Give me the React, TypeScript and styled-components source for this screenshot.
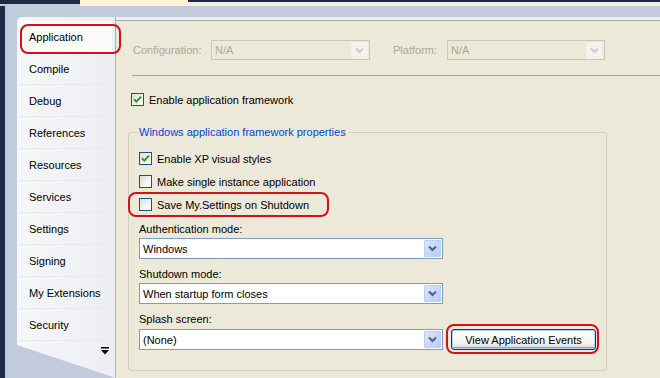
import React from 'react'
import styled, { createGlobalStyle } from 'styled-components'

const GlobalStyle = createGlobalStyle`
  html, body { margin: 0; padding: 0; }
  body {
    font-family: "Liberation Sans", Arial, sans-serif;
    font-size: 11px;
    color: #000;
  }
`

const SPage = styled.div`
  position: relative;
  width: 660px;
  height: 378px;
  overflow: hidden;
  background: #1f2a44;
  display: flex;
  flex-direction: column;
`

const STopBar = styled.div`
  height: 6px;
  display: flex;
  flex-shrink: 0;
`

const STopSegment = styled.div<{ $w?: number; $kind: 'dark' | 'cream' | 'rest' }>`
  width: ${p => (p.$w ? `${p.$w}px` : 'auto')};
  flex: ${p => (p.$w ? '0 0 auto' : '1')};
  background: ${p =>
    p.$kind === 'cream'
      ? '#fdf5da'
      : p.$kind === 'rest'
      ? 'linear-gradient(#1f2a44 0 2px, #f3efe2 2px)'
      : 'linear-gradient(#1f2a44 0 4px, #c1cbdc 4px)'};
`

const SFrame = styled.div`
  flex: 1;
  margin-left: 5px;
  background: #c1cbdc;
  padding: 11px 0 0 12px;
  display: flex;
  min-height: 0;
`

const SSidebar = styled.div`
  width: 98px;
  flex-shrink: 0;
  border-right: 1px solid #a9aeb8;
  border-top-left-radius: 5px;
  background: linear-gradient(to right, #f6f7f9, #eceef2);
  clip-path: polygon(0 0, 100% 0, 100% 100%, 0 328px);
  padding-top: 4px;
  display: flex;
  flex-direction: column;
`

const STab = styled.div<{ $active?: boolean }>`
  height: 32px;
  flex-shrink: 0;
  display: flex;
  align-items: center;
  box-sizing: border-box;
  background: ${p => (p.$active ? '#fbfbfa' : 'transparent')};
  border-bottom: 1px solid ${p => (p.$active ? 'transparent' : '#e7e9ed')};
  margin: 0 3px 0 2px;
  padding-left: 10px;
`

const SSidebarFooter = styled.div`
  display: flex;
  justify-content: flex-end;
  padding: 6px 6px 0 0;
`

const SContent = styled.div`
  flex: 1;
  padding: 23px 0 0 12px;
  background: linear-gradient(#eef0f4 0 3px, #a7abb4 3px 4px, #ece9d8 4px);
  display: flex;
  flex-direction: column;
`

const SConfigRow = styled.div`
  display: flex;
  align-items: center;
  height: 20px;
  margin-left: 5px;
`

const SDimLabel = styled.span<{ $w: number; $gap?: number }>`
  width: ${p => p.$w}px;
  margin-left: ${p => p.$gap ?? 0}px;
  color: #aca899;
`

const SRule = styled.div`
  height: 1px;
  background: #aca899;
  margin: 15px 0 0 4px;
`

const SCheckRow = styled.label<{ $top?: number; $indent?: number }>`
  display: flex;
  align-items: center;
  gap: 5px;
  height: 13px;
  margin-top: ${p => p.$top ?? 0}px;
  margin-left: ${p => p.$indent ?? 0}px;
`

const SBox = styled.span`
  width: 13px;
  height: 13px;
  box-sizing: border-box;
  border: 1px solid #1c5180;
  background: linear-gradient(135deg, #dcdcd5, #ffffff 85%);
  display: flex;
  align-items: center;
  justify-content: center;
  flex-shrink: 0;
`

const SGroup = styled.fieldset`
  margin: 20px 0 0 0;
  width: 478px;
  height: 245px;
  box-sizing: border-box;
  border: 1px solid #d0d0bf;
  border-radius: 3px;
  padding: 13px 10px 0 10px;
  display: flex;
  flex-direction: column;
`

const SLegend = styled.legend`
  color: #0046d5;
  padding: 0 2px;
  margin-left: -2px;
  line-height: 13px;
`

const SFieldLabel = styled.div<{ $top: number }>`
  line-height: 13px;
  margin-top: ${p => p.$top}px;
`

const SComboRow = styled.div<{ $top: number }>`
  display: flex;
  align-items: center;
  gap: 8px;
  margin-top: ${p => p.$top}px;
`

const SCombo = styled.div<{ $w: number; $disabled?: boolean }>`
  width: ${p => p.$w}px;
  height: ${p => (p.$disabled ? 20 : 21)}px;
  box-sizing: border-box;
  border: 1px solid ${p => (p.$disabled ? '#c9c7ba' : '#7f9db9')};
  background: ${p => (p.$disabled ? '#ece9d8' : '#fff')};
  color: ${p => (p.$disabled ? '#aca899' : '#000')};
  display: flex;
  align-items: center;
  padding: 1px 1px 1px 3px;
  flex-shrink: 0;
`

const SComboText = styled.span`
  flex: 1;
`

const SArrowButton = styled.span<{ $disabled?: boolean }>`
  width: 17px;
  height: 17px;
  box-sizing: border-box;
  border-radius: 1px;
  border: 1px solid ${p => (p.$disabled ? '#f2f1ea' : '#bccdf3')};
  background: ${p =>
    p.$disabled ? '#f4f3ee' : 'linear-gradient(135deg, #dbe5fd, #b7cbf7)'};
  display: flex;
  align-items: center;
  justify-content: center;
`

const SButton = styled.button`
  width: 145px;
  height: 21px;
  font: inherit;
  color: #000;
  border: 1px solid #003c74;
  border-radius: 3px;
  background: linear-gradient(#ffffff, #f2f2ee 70%, #dcd8cc);
  box-shadow: inset 0 0 0 1px #b8d0f5, inset 0 -2px 0 #7b9ee6, inset 1px 0 0 #a9c3f0;
  padding: 0;
`

const SMark = styled.div<{ $x: number; $y: number; $w: number; $h: number }>`
  position: absolute;
  left: ${p => p.$x}px;
  top: ${p => p.$y}px;
  width: ${p => p.$w}px;
  height: ${p => p.$h}px;
  box-sizing: border-box;
  border: 2px solid #d0121b;
  border-radius: 8px;
  pointer-events: none;
`

const Check: React.FC<{ checked?: boolean }> = ({ checked }) => (
  <SBox>
    {checked && (
      <svg width="9" height="9" viewBox="0 0 9 9">
        <path d="M1 4.2 L3.4 6.6 L8 1.6" fill="none" stroke="#21a121" strokeWidth="2" />
      </svg>
    )}
  </SBox>
)

const Chevron: React.FC<{ color: string }> = ({ color }) => (
  <svg width="9" height="7" viewBox="0 0 9 7">
    <path d="M1 1.5 L4.5 5 L8 1.5" fill="none" stroke={color} strokeWidth="2" />
  </svg>
)

const Combo: React.FC<{ w: number; value: string; disabled?: boolean }> = ({ w, value, disabled }) => (
  <SCombo $w={w} $disabled={disabled}>
    <SComboText>{value}</SComboText>
    <SArrowButton $disabled={disabled}>
      <Chevron color={disabled ? '#cfcdc2' : '#4d6185'} />
    </SArrowButton>
  </SCombo>
)

const tabs = [
  'Application',
  'Compile',
  'Debug',
  'References',
  'Resources',
  'Services',
  'Settings',
  'Signing',
  'My Extensions',
  'Security',
]

const App: React.FC = () => {
  return (
    <SPage>
      <GlobalStyle />
      <STopBar>
        <STopSegment $w={80} $kind="dark" />
        <STopSegment $w={108} $kind="cream" />
        <STopSegment $kind="rest" />
      </STopBar>
      <SFrame>
        <SSidebar>
          {tabs.map((t, i) => (
            <STab key={t} $active={i === 0}>
              {t}
            </STab>
          ))}
          <SSidebarFooter>
            <svg width="8" height="8" viewBox="0 0 8 8">
              <rect x="0" y="0" width="8" height="1.5" fill="#000" />
              <path d="M0 3 L8 3 L4 7.5 Z" fill="#000" />
            </svg>
          </SSidebarFooter>
        </SSidebar>
        <SContent>
          <SConfigRow>
            <SDimLabel $w={78}>Configuration:</SDimLabel>
            <Combo w={159} value="N/A" disabled />
            <SDimLabel $w={54} $gap={23}>
              Platform:
            </SDimLabel>
            <Combo w={158} value="N/A" disabled />
          </SConfigRow>
          <SRule />
          <SCheckRow $top={17} $indent={3}>
            <Check checked />
            Enable application framework
          </SCheckRow>
          <SGroup>
            <SLegend>Windows application framework properties</SLegend>
            <SCheckRow>
              <Check checked />
              Enable XP visual styles
            </SCheckRow>
            <SCheckRow $top={10}>
              <Check />
              Make single instance application
            </SCheckRow>
            <SCheckRow $top={10}>
              <Check />
              Save My.Settings on Shutdown
            </SCheckRow>
            <SFieldLabel $top={12}>Authentication mode:</SFieldLabel>
            <SComboRow $top={2}>
              <Combo w={304} value="Windows" />
            </SComboRow>
            <SFieldLabel $top={9}>Shutdown mode:</SFieldLabel>
            <SComboRow $top={2}>
              <Combo w={304} value="When startup form closes" />
            </SComboRow>
            <SFieldLabel $top={9}>Splash screen:</SFieldLabel>
            <SComboRow $top={3}>
              <Combo w={304} value="(None)" />
              <SButton>View Application Events</SButton>
            </SComboRow>
          </SGroup>
        </SContent>
      </SFrame>
      <SMark $x={20} $y={24} $w={101} $h={30} />
      <SMark $x={128} $y={192} $w={201} $h={25} />
      <SMark $x={446} $y={324} $w={153} $h={30} />
    </SPage>
  )
}

export default App
